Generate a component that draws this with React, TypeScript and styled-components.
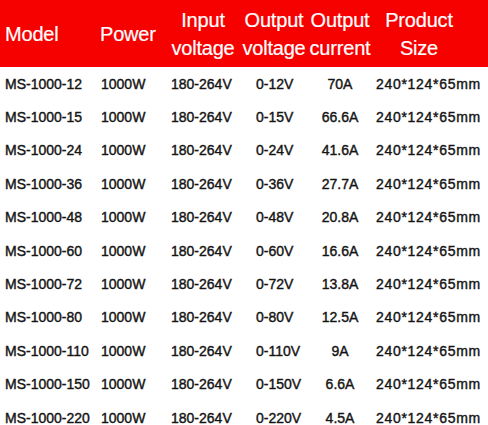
import styled, { createGlobalStyle } from 'styled-components';

const GlobalStyle = createGlobalStyle`
  html, body {
    margin: 0;
    padding: 0;
    background: #fff;
  }
  body {
    font-family: 'Liberation Sans', Arial, sans-serif;
  }
`;

type Align = 'left' | 'center';

type Column = {
  width: number;
  headAlign: Align;
  headPad: [number, number];
  cellAlign: Align;
  cellPad: [number, number];
  spacing?: number;
};

const columns: Column[] = [
  { width: 96, headAlign: 'left', headPad: [5, 0], cellAlign: 'left', cellPad: [5, 0] },
  { width: 62, headAlign: 'left', headPad: [4, 0], cellAlign: 'left', cellPad: [5, 0] },
  { width: 82, headAlign: 'center', headPad: [8, 0], cellAlign: 'left', cellPad: [13, 0] },
  { width: 68, headAlign: 'center', headPad: [0, 0], cellAlign: 'left', cellPad: [16, 0] },
  { width: 64, headAlign: 'center', headPad: [0, 0], cellAlign: 'center', cellPad: [0, 0] },
  { width: 116, headAlign: 'center', headPad: [0, 22], cellAlign: 'left', cellPad: [4, 0], spacing: 0.7 },
];

const headers = [
  ['Model'],
  ['Power'],
  ['Input', 'voltage'],
  ['Output', 'voltage'],
  ['Output', 'current'],
  ['Product', 'Size'],
];

const voltages = [12, 15, 24, 36, 48, 60, 72, 80, 110, 150, 220];
const currents = ['70A', '66.6A', '41.6A', '27.7A', '20.8A', '16.6A', '13.8A', '12.5A', '9A', '6.6A', '4.5A'];

const rows = voltages.map((v, i) => [
  `MS-1000-${v}`,
  '1000W',
  '180-264V',
  `0-${v}V`,
  currents[i],
  '240*124*65mm',
]);

const gridTemplate = columns.map((c) => `${c.width}px`).join(' ');

const Table = styled.div`
  width: 488px;
  height: 425px;
  overflow: hidden;
  background: #fff;
`;

const HeaderRow = styled.div`
  display: grid;
  grid-template-columns: ${gridTemplate};
  height: 67px;
  background: #f70000;
  color: #fff;
`;

const HeadCell = styled.div<{ $align: Align; $pad: [number, number] }>`
  display: flex;
  flex-direction: column;
  justify-content: center;
  align-items: ${(p) => (p.$align === 'left' ? 'flex-start' : 'center')};
  padding: 0 ${(p) => p.$pad[1]}px 0 ${(p) => p.$pad[0]}px;
  font-size: 20px;
  line-height: 28px;
  white-space: nowrap;
  letter-spacing: -0.2px;
  -webkit-text-stroke: 0.2px #fff;
`;

const BodyRow = styled.div`
  display: grid;
  grid-template-columns: ${gridTemplate};
  height: 33.4px;
  align-items: center;
`;

const Cell = styled.div<{ $align: Align; $pad: [number, number]; $spacing?: number }>`
  text-align: ${(p) => p.$align};
  padding: 0 ${(p) => p.$pad[1]}px 0 ${(p) => p.$pad[0]}px;
  font-size: 14px;
  line-height: 16px;
  letter-spacing: ${(p) => p.$spacing ?? 0}px;
  color: #141414;
  white-space: nowrap;
  -webkit-text-stroke: 0.4px #141414;
`;

export default function App() {
  return (
    <>
      <GlobalStyle />
      <Table>
        <HeaderRow>
          {headers.map((lines, i) => (
            <HeadCell key={i} $align={columns[i].headAlign} $pad={columns[i].headPad}>
              {lines.map((line) => (
                <span key={line}>{line}</span>
              ))}
            </HeadCell>
          ))}
        </HeaderRow>
        {rows.map((row, r) => (
          <BodyRow key={r}>
            {row.map((text, i) => (
              <Cell
                key={i}
                $align={columns[i].cellAlign}
                $pad={columns[i].cellPad}
                $spacing={columns[i].spacing}
              >
                {text}
              </Cell>
            ))}
          </BodyRow>
        ))}
      </Table>
    </>
  );
}
